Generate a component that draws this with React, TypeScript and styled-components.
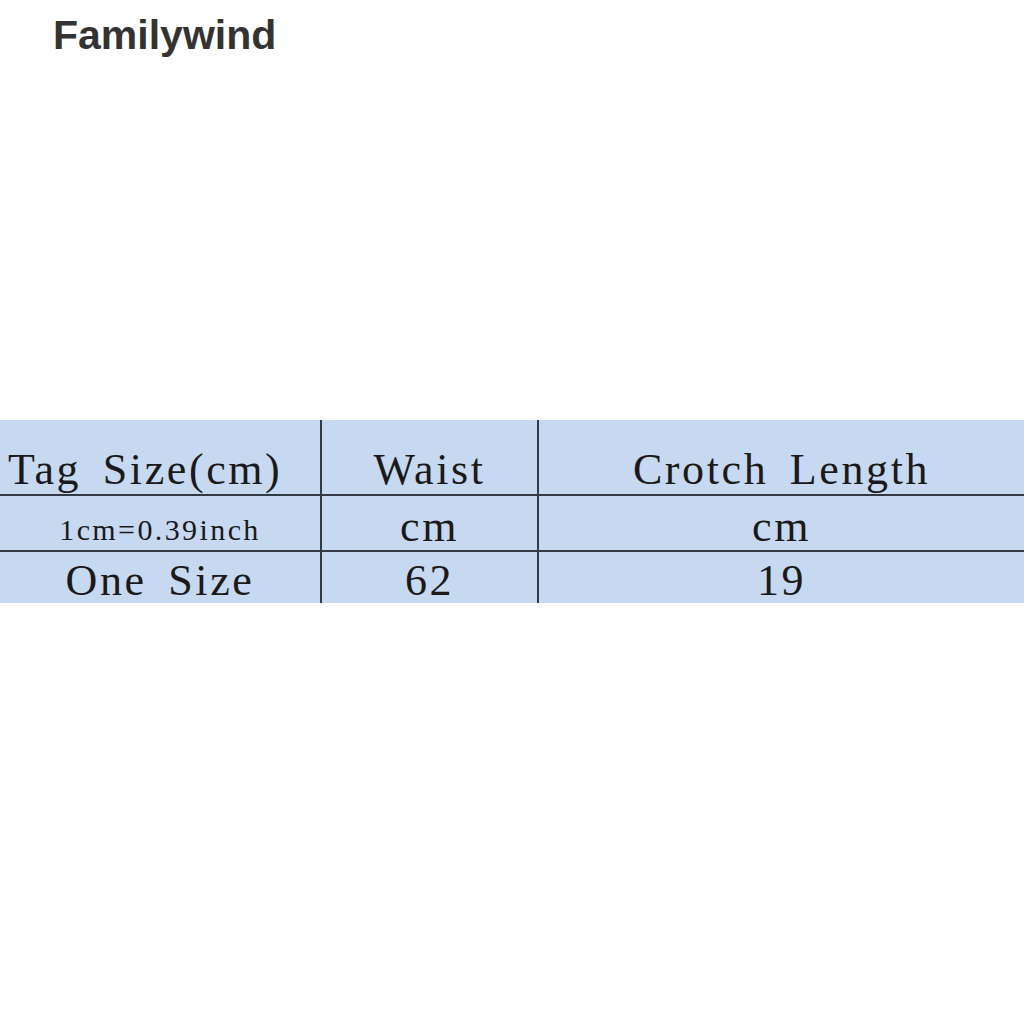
import React from 'react';
import styled, {createGlobalStyle} from "styled-components";

const GlobalStyle = createGlobalStyle`
  html, body {
    margin: 0;
    padding: 0;
    background: #ffffff;
  }
`

const rows = [
    {cells: ["Tag Size(cm)", "Waist", "Crotch Length"], kind: "head"},
    {cells: ["1cm=0.39inch", "cm", "cm"], kind: "unit"},
    {cells: ["One Size", "62", "19"], kind: "body"},
] as const;

export default function App() {
    return (<>
            <GlobalStyle/>
            <Page>
                <Brand>Familywind</Brand>
                <SizeTable>
                    {rows.map((row) => row.cells.map((text, i) => (
                        <Cell key={row.kind + i} kind={row.kind} first={i === 0}>
                            <CellText small={row.kind === "unit" && i === 0}>{text}</CellText>
                        </Cell>
                    )))}
                </SizeTable>
            </Page>
        </>
    );
}

const Page = styled.div`
  width: 1024px;
  height: 1024px;
  display: flex;
  flex-direction: column;
  background: #fff;
`

const Brand = styled.div`
  padding: 15px 0 0 53px;
  height: 420px;
  box-sizing: border-box;
  font-family: "Liberation Sans", Arial, sans-serif;
  font-weight: bold;
  font-size: 41px;
  line-height: 1;
  color: #333333;
`

const SizeTable = styled.div`
  display: grid;
  grid-template-columns: 320px 215px 1fr;
  grid-template-rows: 74px 54px 51px;
  column-gap: 2px;
  row-gap: 2px;
  background: #323a45;
`

const Cell = styled.div<{ kind: string; first: boolean }>`
  background: #c6d9f1;
  display: flex;
  align-items: flex-end;
  justify-content: ${p => p.kind === "head" && p.first ? "flex-start" : "center"};
  padding-left: ${p => p.kind === "head" && p.first ? "8px" : "0"};
  padding-bottom: ${p => p.kind === "head" ? "2px" : p.kind === "unit" ? "1px" : "0"};
`

const CellText = styled.span<{ small: boolean }>`
  font-family: "Liberation Serif", "Times New Roman", serif;
  font-size: ${p => p.small ? "30px" : "44px"};
  letter-spacing: ${p => p.small ? "2.4px" : "2.6px"};
  word-spacing: ${p => p.small ? "0" : "8px"};
  line-height: 1;
  color: #1a1a1a;
  white-space: pre;
  margin-bottom: ${p => p.small ? "4px" : "0"};
`
